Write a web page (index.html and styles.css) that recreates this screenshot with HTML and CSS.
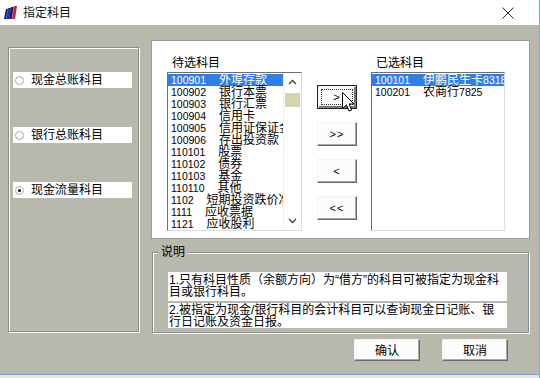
FILE: index.html
```html
<!DOCTYPE html>
<html lang="zh-CN">
<head>
    <meta charset="UTF-8">
    <title>指定科目</title>
    <link rel="stylesheet" href="styles.css">
</head>
<body>
    <div class="window">
        <div class="titlebar">
            <svg class="app-icon" width="15" height="15" viewBox="0 0 15 15">
                <polygon points="1,14 3,4 5,4 3,14" fill="#111"/>
                <polygon points="3,14 5,3 8,3 6,14" fill="#1c2fb8"/>
                <polygon points="6,14 8,2 11,2 9,14" fill="#0d1a70"/>
                <polygon points="9,14 11,1 14,1 12,14" fill="#c8202e"/>
                <line x1="5" y1="3" x2="3" y2="14" stroke="#6f7fe0" stroke-width="0.6"/>
                <line x1="11" y1="1" x2="9" y2="14" stroke="#f08090" stroke-width="0.6"/>
            </svg>
            <span class="title">指定科目</span>
            <svg class="close-icon" width="12" height="12" viewBox="0 0 12 12">
                <path d="M0.5 0.5 L11.5 11.5 M11.5 0.5 L0.5 11.5" stroke="#222" stroke-width="1"/>
            </svg>
        </div>

        <div class="dialog">
            <div class="main">
                <div class="choice-panel">
                    <div class="radio-row"><span class="radio"></span>现金总账科目</div>
                    <div class="radio-row"><span class="radio"></span>银行总账科目</div>
                    <div class="radio-row"><span class="radio checked"></span>现金流量科目</div>
                </div>

                <div class="right-col">
                    <div class="picker">
                        <div class="pick-col">
                            <div class="pick-label">待选科目</div>
                            <div class="listbox">
                                <div class="rows">
                                    <div class="row selected"><span class="code">100901</span>外埠存款</div>
                                    <div class="row"><span class="code">100902</span>银行本票</div>
                                    <div class="row"><span class="code">100903</span>银行汇票</div>
                                    <div class="row"><span class="code">100904</span>信用卡</div>
                                    <div class="row"><span class="code">100905</span>信用证保证金</div>
                                    <div class="row"><span class="code">100906</span>存出投资款</div>
                                    <div class="row"><span class="code">110101</span>股票</div>
                                    <div class="row"><span class="code">110102</span>债券</div>
                                    <div class="row"><span class="code">110103</span>基金</div>
                                    <div class="row"><span class="code">110110</span>其他</div>
                                    <div class="row"><span class="code">1102</span>短期投资跌价准备</div>
                                    <div class="row"><span class="code">1111</span>应收票据</div>
                                    <div class="row"><span class="code">1121</span>应收股利</div>
                                </div>
                                <div class="scrollbar">
                                    <svg width="9" height="6" viewBox="0 0 9 6"><path d="M1 5 L4.5 1.5 L8 5" fill="none" stroke="#444" stroke-width="1.4"/></svg>
                                    <div class="thumb"></div>
                                    <div class="track"></div>
                                    <svg width="9" height="6" viewBox="0 0 9 6"><path d="M1 1 L4.5 4.5 L8 1" fill="none" stroke="#444" stroke-width="1.4"/></svg>
                                </div>
                            </div>
                        </div>

                        <div class="move-buttons">
                            <button class="move-btn focused"><span class="focus-ring">&gt;</span></button>
                            <button class="move-btn">&gt;&gt;</button>
                            <button class="move-btn">&lt;</button>
                            <button class="move-btn">&lt;&lt;</button>
                            <svg class="cursor" width="13" height="21" viewBox="0 0 13 21">
                                <path d="M0.5 0.5 L0.5 16.5 L4.5 12.8 L7 19 L9.6 18 L7.2 12 L12 12 Z" fill="#fff" stroke="#000" stroke-width="1"/>
                            </svg>
                        </div>

                        <div class="pick-col">
                            <div class="pick-label">已选科目</div>
                            <div class="listbox">
                                <div class="rows">
                                    <div class="row selected"><span class="code">100101</span>伊鹏民生卡<span class="num">8318</span></div>
                                    <div class="row"><span class="code">100201</span>农商行<span class="num">7825</span></div>
                                </div>
                            </div>
                        </div>
                    </div>

                    <div class="groupbox">
                        <div class="group-title">说明</div>
                        <div class="note note-first">
                            <span class="line">1.只有科目性质（余额方向）为“借方”的科目可被指定为现金科</span>
                            <span class="line">目或银行科目。</span>
                        </div>
                        <div class="note note-second">
                            <span class="line">2.被指定为现金/银行科目的会计科目可以查询现金日记账、银</span>
                            <span class="line">行日记账及资金日报。</span>
                        </div>
                    </div>
                </div>
            </div>

            <div class="actions">
                <button class="action-btn">确认</button>
                <button class="action-btn">取消</button>
            </div>
        </div>
    </div>
</body>
</html>
```

FILE: styles.css
```css
body {
    margin: 0;
    font-family: "Liberation Sans", "Noto Sans CJK SC", sans-serif;
    font-size: 12px;
    color: #000;
    background-color: #e9e8d8;
}
.window {
    width: 540px;
    height: 378px;
    box-sizing: border-box;
    border-right: 1px solid #7ea8d8;
    overflow: hidden;
}
.titlebar {
    height: 25px;
    background-color: #fff;
    display: flex;
    align-items: center;
    padding-left: 3px;
}
.app-icon {
    margin-right: 5px;
    margin-top: -1px;
}
.title {
    line-height: 14px;
    color: #111;
}
.close-icon {
    margin-left: auto;
    margin-right: 25px;
    margin-top: 1px;
}
.dialog {
    height: 349px;
    background-color: #b9b8ac;
    border-bottom: 1px solid #6f9fd6;
}
.main {
    display: flex;
    gap: 12px;
    padding: 15px 0 0 8px;
}

/* left radio panel */
.choice-panel {
    width: 131px;
    height: 285px;
    margin-top: 7px;
    box-sizing: border-box;
    border: 1px solid #8d8d8d;
    box-shadow: inset 1px 1px 0 #fff, 1px 1px 0 #fff;
    padding: 24px 6px 0 4px;
    display: flex;
    flex-direction: column;
    gap: 39px;
}
.radio-row {
    height: 16px;
    line-height: 16px;
    background-color: #fff;
    display: flex;
    align-items: center;
    white-space: nowrap;
}
.radio {
    width: 9px;
    height: 9px;
    box-sizing: border-box;
    border: 1px solid #a9a9a9;
    border-radius: 50%;
    margin: 0 7px 0 2px;
    background-color: #fff;
    position: relative;
}
.radio.checked::after {
    content: "";
    position: absolute;
    left: 2px;
    top: 2px;
    width: 3px;
    height: 3px;
    border-radius: 50%;
    background-color: #000;
}

/* picker */
.right-col {
    width: 379px;
}
.picker {
    height: 199px;
    box-sizing: border-box;
    border: 1px solid #9c9c9c;
    background-color: #fff;
    padding: 15px 0 0 15px;
    display: flex;
}
.pick-label {
    height: 16px;
    line-height: 14px;
    padding-left: 5px;
}
.pick-col:first-child .listbox {
    width: 135px;
}
.pick-col:last-child .listbox {
    width: 134px;
}
.listbox {
    height: 159px;
    box-sizing: border-box;
    border: 1px solid;
    border-color: #6e6e6e #dcdcdc #dcdcdc #6e6e6e;
    display: flex;
    overflow: hidden;
}
.rows {
    flex: 1;
    overflow: hidden;
    padding-top: 1px;
}
.row {
    height: 12px;
    line-height: 12px;
    white-space: nowrap;
    padding-left: 3px;
}
.row.selected {
    background-color: #2f7fe6;
    color: #fff;
}
.code {
    display: inline-block;
    font-size: 10.5px;
    padding-right: 13px;
}
.num {
    font-size: 10.5px;
}
.scrollbar {
    width: 17px;
    display: flex;
    flex-direction: column;
    align-items: center;
    border-left: 1px solid #f0f0f0;
}
.scrollbar svg {
    margin: 6px 0;
}
.thumb {
    width: 15px;
    height: 14px;
    margin-top: 2px;
    background-color: #d6d3b0;
}
.track {
    flex: 1;
}

/* move buttons */
.move-buttons {
    position: relative;
    margin: 0 14px 0 15px;
    padding-top: 29px;
    display: flex;
    flex-direction: column;
    gap: 13px;
}
.move-btn {
    width: 40px;
    height: 24px;
    padding: 0;
    font-family: "Liberation Sans", sans-serif;
    font-size: 11px;
    letter-spacing: 1px;
    background-color: #fcfcfc;
    border: 1px solid;
    border-color: #f2f2f2 #6a6a6a #6a6a6a #f2f2f2;
    box-shadow: inset -1px -1px 0 #a8a8a8;
}
.move-btn.focused {
    border-color: #222;
    box-shadow: inset 1px 1px 0 #f4f4f4, inset -2px -2px 0 #7a7a7a;
    padding: 3px;
}
.focus-ring {
    display: block;
    height: 100%;
    box-sizing: border-box;
    border: 1px dotted #333;
    line-height: 14px;
}
.cursor {
    position: absolute;
    left: 25px;
    top: 36px;
}

/* description group */
.groupbox {
    margin: 13px 0 0 1px;
    width: 377px;
    height: 81px;
    box-sizing: border-box;
    border: 1px solid #8d8d8d;
    box-shadow: inset 1px 1px 0 #fff, 1px 1px 0 #fff;
    padding-left: 15px;
}
.group-title {
    display: inline-block;
    margin: -8px 0 0 -10px;
    padding: 0 3px;
    line-height: 14px;
    background-color: #b9b8ac;
    vertical-align: top;
}
.note {
    width: 339px;
    box-sizing: border-box;
    background-color: #fff;
    padding: 2px 0 0 1px;
}
.note-first {
    height: 29px;
    margin-top: 5px;
}
.note-second {
    height: 25px;
    margin-top: 2px;
    padding-top: 1px;
}
.line {
    display: block;
    line-height: 12px;
    white-space: nowrap;
}

/* bottom buttons */
.actions {
    display: flex;
    justify-content: flex-end;
    gap: 22px;
    padding: 6px 31px 0 0;
}
.action-btn {
    width: 66px;
    height: 22px;
    padding: 0;
    font-family: "Noto Sans CJK SC", sans-serif;
    font-size: 12px;
    line-height: 14px;
    background-color: #fcfcfc;
    border: 1px solid;
    border-color: #f2f2f2 #6a6a6a #6a6a6a #f2f2f2;
    box-shadow: inset -1px -1px 0 #a8a8a8;
}
```
